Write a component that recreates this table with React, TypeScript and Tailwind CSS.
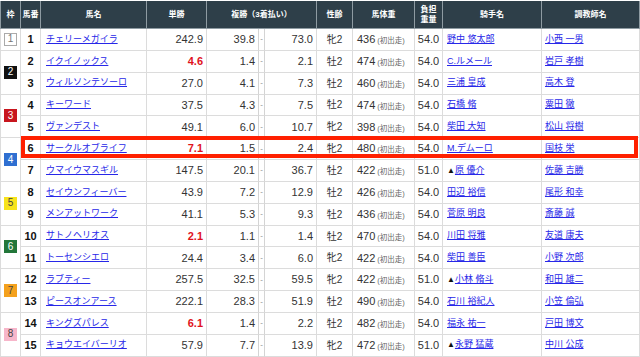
import type { ReactNode } from 'react'

interface Row {
  waku: number
  no: number
  name: string
  odds: string
  hot?: boolean
  pl: string
  ph: string
  sex: string
  wt: string
  kg: string
  jockey: string
  trainer: string
}

const rows: Row[] = [
  { waku: 1, no: 1, name: 'チェリーメガイラ', odds: '242.9', pl: '39.8', ph: '73.0', sex: '牝2', wt: '436', kg: '54.0', jockey: '野中 悠太郎', trainer: '小西 一男' },
  { waku: 2, no: 2, name: 'イクイノックス', odds: '4.6', hot: true, pl: '1.4', ph: '2.1', sex: '牡2', wt: '474', kg: '54.0', jockey: 'C.ルメール', trainer: '岩戸 孝樹' },
  { waku: 2, no: 3, name: 'ウィルソンテソーロ', odds: '27.0', pl: '4.1', ph: '7.3', sex: '牡2', wt: '460', kg: '54.0', jockey: '三浦 皇成', trainer: '高木 登' },
  { waku: 3, no: 4, name: 'キーワード', odds: '37.5', pl: '4.3', ph: '7.5', sex: '牡2', wt: '474', kg: '54.0', jockey: '石橋 脩', trainer: '粟田 徹' },
  { waku: 3, no: 5, name: 'ヴァンデスト', odds: '49.1', pl: '6.0', ph: '10.7', sex: '牝2', wt: '398', kg: '54.0', jockey: '柴田 大知', trainer: '松山 将樹' },
  { waku: 4, no: 6, name: 'サークルオブライフ', odds: '7.1', hot: true, pl: '1.5', ph: '2.4', sex: '牝2', wt: '480', kg: '54.0', jockey: 'M.デムーロ', trainer: '国枝 栄' },
  { waku: 4, no: 7, name: 'ウマイウマスギル', odds: '147.5', pl: '20.1', ph: '36.7', sex: '牡2', wt: '422', kg: '51.0', jockey: '▲原 優介', trainer: '佐藤 吉勝' },
  { waku: 5, no: 8, name: 'セイウンフィーバー', odds: '43.9', pl: '7.2', ph: '12.9', sex: '牡2', wt: '426', kg: '54.0', jockey: '田辺 裕信', trainer: '尾形 和幸' },
  { waku: 5, no: 9, name: 'メンアットワーク', odds: '41.1', pl: '5.3', ph: '9.3', sex: '牡2', wt: '436', kg: '54.0', jockey: '菅原 明良', trainer: '斎藤 誠' },
  { waku: 6, no: 10, name: 'サトノヘリオス', odds: '2.1', hot: true, pl: '1.1', ph: '1.4', sex: '牡2', wt: '470', kg: '54.0', jockey: '川田 将雅', trainer: '友道 康夫' },
  { waku: 6, no: 11, name: 'トーセンシエロ', odds: '24.4', pl: '3.4', ph: '6.0', sex: '牝2', wt: '422', kg: '54.0', jockey: '柴田 善臣', trainer: '小野 次郎' },
  { waku: 7, no: 12, name: 'ラブティー', odds: '257.5', pl: '32.5', ph: '59.5', sex: '牝2', wt: '422', kg: '51.0', jockey: '▲小林 脩斗', trainer: '和田 雄二' },
  { waku: 7, no: 13, name: 'ピースオンアース', odds: '222.1', pl: '28.3', ph: '51.9', sex: '牡2', wt: '490', kg: '54.0', jockey: '石川 裕紀人', trainer: '小笠 倫弘' },
  { waku: 8, no: 14, name: 'キングズパレス', odds: '6.1', hot: true, pl: '1.4', ph: '2.2', sex: '牡2', wt: '482', kg: '54.0', jockey: '福永 祐一', trainer: '戸田 博文' },
  { waku: 8, no: 15, name: 'キョウエイバーリオ', odds: '57.9', pl: '7.7', ph: '13.9', sex: '牝2', wt: '472', kg: '51.0', jockey: '▲永野 猛蔵', trainer: '中川 公成' },
]

const wakuStyle: Record<number, string> = {
  1: 'bg-white border border-[#aaa] text-[#777]',
  2: 'bg-[#111] text-white',
  3: 'bg-[#c8161e] text-white',
  4: 'bg-[#2f6fd1] text-white',
  5: 'bg-[#f7e31c] text-[#444]',
  6: 'bg-[#23773a] text-white',
  7: 'bg-[#f4a11d] text-[#444]',
  8: 'bg-[#f7b6ca] text-[#444]',
}

const td = 'border-b border-r border-[#dcdcdc] p-0'
const th = 'border-r border-b border-[#8e9ba2] bg-[#2e3f49] p-0 text-center text-[8px] font-bold leading-[10px] text-white'

function Link({ children }: { children: ReactNode }) {
  return <span className="text-[#2727e8] underline decoration-[#2727e8] underline-offset-[1px]">{children}</span>
}

function Person({ value }: { value: string }) {
  if (value.startsWith('▲')) {
    return (
      <>
        <span className="text-[8px] text-[#111]">▲</span>
        <Link>{value.slice(1)}</Link>
      </>
    )
  }
  return <Link>{value}</Link>
}

export default function App() {
  return (
    <div className="relative h-[357px] w-[640px] overflow-hidden bg-white pt-px font-['Liberation_Sans','Noto_Sans_CJK_JP',sans-serif]">
      <table className="w-[640px] table-fixed border-separate border-spacing-0">
        <colgroup>
          <col className="w-[21px]" />
          <col className="w-[20px]" />
          <col className="w-[106px]" />
          <col className="w-[60px]" />
          <col className="w-[52px]" />
          <col className="w-[6px]" />
          <col className="w-[52px]" />
          <col className="w-[36px]" />
          <col className="w-[62px]" />
          <col className="w-[28px]" />
          <col className="w-[99px]" />
          <col className="w-[98px]" />
        </colgroup>
        <thead>
          <tr className="h-[28px]">
            <th className={`${th} border-l`}>枠</th>
            <th className={th}>馬番</th>
            <th className={th}>馬名</th>
            <th className={th}>単勝</th>
            <th className={th} colSpan={3}>複勝（3着払い）</th>
            <th className={th}>性齢</th>
            <th className={th}>馬体重</th>
            <th className={th}>負担<br />重量</th>
            <th className={th}>騎手名</th>
            <th className={th}>調教師名</th>
          </tr>
        </thead>
        <tbody>
          {rows.map((r) => {
            const first = r.waku === 1 || r.no % 2 === 0
            return (
              <tr key={r.no} className="h-[21.85px] text-[11px] text-[#333]">
                {first && (
                  <td className={`${td} border-l text-center`} rowSpan={r.waku === 1 ? 1 : 2}>
                    <span className={`mx-auto flex h-[13px] w-[13px] items-center justify-center text-[10px] leading-none ${wakuStyle[r.waku]}`}>
                      {r.waku}
                    </span>
                  </td>
                )}
                <td className={`${td} text-center font-bold text-[#111]`}>{r.no}</td>
                <td className={`${td} pl-[5px] text-[9px] whitespace-nowrap`}>
                  <Link>{r.name}</Link>
                </td>
                <td className={`${td} pr-[3px] text-right ${r.hot ? 'font-bold text-[#e0121c]' : ''}`}>{r.odds}</td>
                <td className={`${td} border-r-[#d4d4d4] border-r-dotted pr-[3px] text-right`}>{r.pl}</td>
                <td className={`${td} border-r-[#d4d4d4] border-r-dotted text-center text-[8px] text-[#888]`}>-</td>
                <td className={`${td} pr-[3px] text-right`}>{r.ph}</td>
                <td className={`${td} text-center text-[10px]`}>{r.sex}</td>
                <td className={`${td} pl-[4px] whitespace-nowrap`}>
                  {r.wt}
                  <span className="ml-[2px] text-[7.5px] text-[#666]">(初出走)</span>
                </td>
                <td className={`${td} text-center`}>{r.kg}</td>
                <td className={`${td} pl-[4px] text-[9px] whitespace-nowrap`}>
                  <Person value={r.jockey} />
                </td>
                <td className={`${td} pl-[3px] text-[9px] whitespace-nowrap`}>
                  <Link>{r.trainer}</Link>
                </td>
              </tr>
            )
          })}
        </tbody>
      </table>
      {/* highlight around horse no.6 */}
      <div className="pointer-events-none absolute left-[21px] top-[136px] h-[22px] w-[617px] border-4 border-[#ff2000]" />
    </div>
  )
}
